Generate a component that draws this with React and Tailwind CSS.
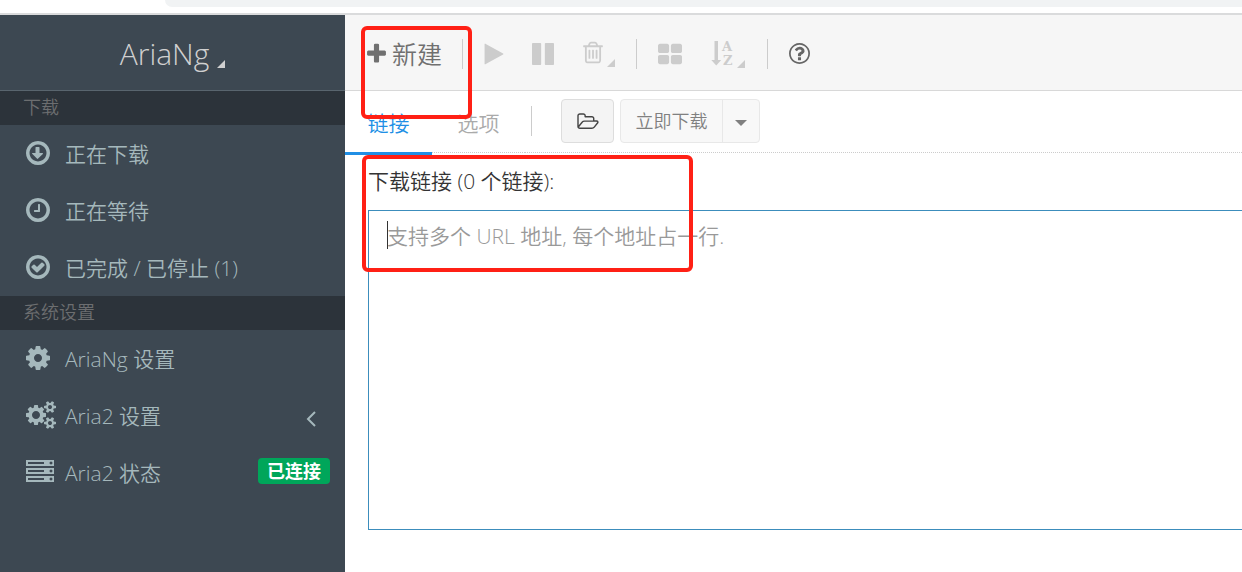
import React from "react";

const RING_OUTER =
  "M1664 896q0 209-103 385.5t-279.5 279.5-385.5 103-385.5-103-279.5-279.5-103-385.5 103-385.5 279.5-279.5 385.5-103 385.5 103 279.5 279.5 103 385.5z";
const RING_INNER =
  "M896 352q-148 0-273 73t-198 198-73 273 73 273 198 198 273 73 273-73 198-198 73-273-73-273-198-198-273-73z";

const PATHS = {
  down:
    "M1216 928q0 14-10 24l-319 319q-10 9-23 9-12 0-23-9l-320-320q-15-16-7-35 8-20 30-20h192v-352q0-14 9-23t23-9h192q14 0 23 9t9 23v352h192q14 0 23 9t9 23z",
  clock:
    "M1024 544v448q0 14-9 23t-23 9h-320q-14 0-23-9t-9-23v-64q0-14 9-23t23-9h224v-352q0-14 9-23t23-9h64q14 0 23 9t9 23z",
  check:
    "M1299 813l-422 422q-19 19-45 19t-45-19l-294-294q-19-19-19-45t19-45l102-102q19-19 45-19t45 19l147 147 275-275q19-19 45-19t45 19l102 102q19 19 19 45t-19 45z",
  cog:
    "M1152 896q0-106-75-181t-181-75-181 75-75 181 75 181 181 75 181-75 75-181zm512-109v222q0 12-8 23t-20 13l-185 28q-19 54-39 91 35 50 107 138 10 12 10 25t-9 23q-27 37-99 108t-94 71q-12 0-26-9l-138-108q-44 23-91 38-16 136-29 186-7 28-36 28h-222q-14 0-24.500-8.500t-11.500-21.500l-28-184q-49-16-90-37l-141 107q-10 9-25 9-14 0-25-11-126-114-165-168-7-10-7-23 0-12 8-23 15-21 51-66.500t54-70.500q-27-50-41-99l-183-27q-13-2-21-12.500t-8-23.500v-222q0-12 8-23t19-13l186-28q14-46 39-92-40-57-107-138-10-12-10-24 0-10 9-23 26-36 98.500-107.500t94.500-71.500q13 0 26 10l138 107q44-23 91-38 16-136 29-186 7-28 36-28h222q14 0 24.500 8.500t11.500 21.500l28 184q49 16 90 37l142-107q9-9 24-9 13 0 25 10 129 119 165 170 7 8 7 22 0 12-8 23-15 21-51 66.500t-54 70.500q26 50 41 98l183 28q13 2 21 12.500t8 23.500z",
  cogs:
    "M896 896q0-106-75-181t-181-75-181 75-75 181 75 181 181 75 181-75 75-181zm768 512q0-52-38-90t-90-38-90 38-38 90q0 53 37.500 90.500t90.500 37.500 90.500-37.500 37.500-90.500zm0-1024q0-52-38-90t-90-38-90 38-38 90q0 53 37.500 90.500t90.500 37.500 90.500-37.500 37.500-90.500zm-384 421v185q0 10-7 19.500t-16 10.500l-155 24q-11 35-32 76 34 48 90 115 7 11 7 20 0 12-7 19-23 30-82.500 89.500t-78.500 59.500q-11 0-21-7l-115-90q-37 19-77 31-11 108-23 155-7 24-30 24h-186q-11 0-20-7.500t-10-17.500l-23-153q-34-10-75-31l-118 89q-7 7-20 7-11 0-21-8-144-133-144-160 0-9 7-19 10-14 41-53t47-61q-23-44-35-82l-152-24q-10-1-17-9.500t-7-19.500v-185q0-10 7-19.500t16-10.500l155-24q11-35 32-76-34-48-90-115-7-11-7-20 0-12 7-20 22-30 82-89t79-59q11 0 21 7l115 90q34-18 77-32 11-108 23-154 7-24 30-24h186q11 0 20 7.500t10 17.500l23 153q34 10 75 31l118-89q8-7 20-7 11 0 21 8 144 133 144 160 0 8-7 19-12 16-42 54t-45 60q23 48 34 82l152 23q10 2 17 10.500t7 19.500zm640 533v140q0 16-149 31-12 27-30 52 51 113 51 138 0 4-4 7-122 71-124 71-8 0-46-47t-52-68q-20 2-30 2t-30-2q-14 21-52 68t-46 47q-2 0-124-71-4-3-4-7 0-25 51-138-18-25-30-52-149-15-149-31v-140q0-16 149-31 13-29 30-52-51-113-51-138 0-4 4-7 4-2 35-20t59-34 30-16q8 0 46 46.500t52 67.500q20-2 30-2t30 2q51-71 92-112l6-2q4 0 124 70 4 3 4 7 0 25-51 138 17 23 30 52 149 15 149 31zm0-1024v140q0 16-149 31-12 27-30 52 51 113 51 138 0 4-4 7-122 71-124 71-8 0-46-47t-52-68q-20 2-30 2t-30-2q-14 21-52 68t-46 47q-2 0-124-71-4-3-4-7 0-25 51-138-18-25-30-52-149-15-149-31v-140q0-16 149-31 13-29 30-52-51-113-51-138 0-4 4-7 4-2 35-20t59-34 30-16q8 0 46 46.500t52 67.500q20-2 30-2t30 2q51-71 92-112l6-2q4 0 124 70 4 3 4 7 0 25-51 138 17 23 30 52 149 15 149 31z",
  server:
    "M128 1408h1024v-128h-1024v128zm0-512h1024v-128h-1024v128zm1568 448q0-40-28-68t-68-28-68 28-28 68 28 68 68 28 68-28 28-68zm-1568-960h1024v-128h-1024v128zm1568 448q0-40-28-68t-68-28-68 28-28 68 28 68 68 28 68-28 28-68zm0-512q0-40-28-68t-68-28-68 28-28 68 28 68 68 28 68-28 28-68zm96 832v384h-1792v-384h1792zm0-512v384h-1792v-384h1792zm0-512v384h-1792v-384h1792z",
  plus:
    "M1600 736v192q0 40-28 68t-68 28h-416v416q0 40-28 68t-68 28h-192q-40 0-68-28t-28-68v-416h-416q-40 0-68-28t-28-68v-192q0-40 28-68t68-28h416v-416q0-40 28-68t68-28h192q40 0 68 28t28 68v416h416q40 0 68 28t28 68z",
  play:
    "M1576 927l-1328 738q-23 13-39.500 3t-16.500-36v-1472q0-26 16.500-36t39.500 3l1328 738q23 13 23 31t-23 31z",
  pause:
    "M1664 192v1408q0 26-19 45t-45 19h-512q-26 0-45-19t-19-45v-1408q0-26 19-45t45-19h512q26 0 45 19t19 45zm-896 0v1408q0 26-19 45t-45 19h-512q-26 0-45-19t-19-45v-1408q0-26 19-45t45-19h512q26 0 45 19t19 45z",
  trash:
    "M704 736v576q0 14-9 23t-23 9h-64q-14 0-23-9t-9-23v-576q0-14 9-23t23-9h64q14 0 23 9t9 23zm256 0v576q0 14-9 23t-23 9h-64q-14 0-23-9t-9-23v-576q0-14 9-23t23-9h64q14 0 23 9t9 23zm256 0v576q0 14-9 23t-23 9h-64q-14 0-23-9t-9-23v-576q0-14 9-23t23-9h64q14 0 23 9t9 23zm128 724v-948h-896v948q0 22 7 40.500t14.500 27 10.500 8.500h832q3 0 10.500-8.500t14.500-27 7-40.500zm-672-1076h448l-48-117q-7-9-17-11h-317q-10 2-17 11zm928 32v64q0 14-9 23t-23 9h-96v948q0 83-47 143.500t-113 60.500h-832q-66 0-113-58.500t-47-141.500v-952h-96q-14 0-23-9t-9-23v-64q0-14 9-23t23-9h309l70-167q15-37 54-63t79-26h320q40 0 79 26t54 63l70 167h309q14 0 23 9t9 23z",
  grid:
    "M832 1024v384q0 52-38 90t-90 38h-512q-52 0-90-38t-38-90v-384q0-52 38-90t90-38h512q52 0 90 38t38 90zm0-768v384q0 52-38 90t-90 38h-512q-52 0-90-38t-38-90v-384q0-52 38-90t90-38h512q52 0 90 38t38 90zm896 768v384q0 52-38 90t-90 38h-512q-52 0-90-38t-38-90v-384q0-52 38-90t90-38h512q52 0 90 38t38 90zm0-768v384q0 52-38 90t-90 38h-512q-52 0-90-38t-38-90v-384q0-52 38-90t90-38h512q52 0 90 38t38 90z",
  help:
    "M1008 1200v160q0 14-9 23t-23 9h-160q-14 0-23-9t-9-23v-160q0-14 9-23t23-9h160q14 0 23 9t9 23zm256-496q0 50-15 90t-45.500 69-52 44-59.500 36q-32 18-46.500 28t-26 24-11.500 29v32q0 14-9 23t-23 9h-160q-14 0-23-9t-9-23v-68q0-35 10.500-64.500t24-47.500 39-35.500 41-25.500 44.500-21q53-25 75-43t22-49q0-42-43.500-71.500t-95.500-29.500q-56 0-95 27-29 20-80 83-9 12-25 12-11 0-19-6l-108-82q-10-7-12-20t5-23q122-192 349-192 129 0 238.500 89.500t109.500 214.500zm-368-448q-130 0-248.500 51t-204 136.500-136.500 204-51 248.500 51 248.500 136.500 204 204 136.500 248.500 51 248.500-51 204-136.500 136.500-204 51-248.500-51-248.500-136.500-204-204-136.500-248.500-51z",
  folder:
    "M1781 1000q0-31-53-31h-1088q-40 0-85.500 21.500t-71.500 52.500l-294 363q-18 24-18 40 0 31 53 31h1088q40 0 86-22t71-53l294-363q18-22 18-39zm-1141-159h768v-160q0-40-28-68t-68-28h-576q-40 0-68-28t-28-68v-64q0-40-28-68t-68-28h-320q-40 0-68 28t-28 68v853l256-315q44-53 116-87.500t140-34.500zm1269 159q0 62-46 120l-295 363q-43 53-116 87.500t-140 34.500h-1088q-92 0-158-66t-66-158v-960q0-92 66-158t158-66h320q92 0 158 66t66 158v32h544q92 0 158 66t66 158v160h192q54 0 99 24.500t67 70.500q15 32 15 68z",
};

function Icon({ d, box = "128 0 1536 1792", className }) {
  return (
    <svg viewBox={box} className={className} fill="currentColor" fillRule="evenodd" aria-hidden="true">
      <path d={d} />
    </svg>
  );
}

function Corner({ className = "" }) {
  return (
    <svg viewBox="0 0 8 8" className={"size-2 " + className} fill="currentColor" aria-hidden="true">
      <path d="M8 0v8H0z" />
    </svg>
  );
}

function SortIcon() {
  return (
    <svg viewBox="0 0 24 28" className="h-7 w-6" fill="currentColor" aria-hidden="true">
      <path d="M3.500 1h3.500v19h3.200L5.250 25.500.3 20h3.200z" />
      <text x="11" y="11" className="font-['DejaVu_Serif',serif] text-[13px] leading-none font-bold">A</text>
      <text x="12" y="25" className="font-['DejaVu_Serif',serif] text-[13px] leading-none font-bold">Z</text>
    </svg>
  );
}

const ring = (inner) => RING_OUTER + RING_INNER + inner;

const downloads = [
  { label: "正在下载", d: ring(PATHS.down) },
  { label: "正在等待", d: ring(PATHS.clock) },
  { label: "已完成 / 已停止 (1)", d: ring(PATHS.check) },
];

const settings = [
  { label: "AriaNg 设置", d: PATHS.cog },
  { label: "Aria2 设置", d: PATHS.cogs, box: "0 0 1920 1792", size: "h-7 w-[30px]", expandable: true },
  { label: "Aria2 状态", d: PATHS.server, box: "0 0 1792 1792", size: "size-7", badge: "已连接" },
];

function NavItem({ label, d, box, size = "h-7 w-6", expandable, badge }) {
  return (
    <li>
      <a href="#" className="flex h-[57px] items-center pr-[15px] pb-[2px] pl-[26px]">
        <span className="flex w-[39px] shrink-0">
          <Icon d={d} box={box} className={size} />
        </span>
        <span className="grow pt-1 whitespace-nowrap">{label}</span>
        {expandable && (
          <svg viewBox="0 0 10 16" className="mt-2 mr-[14px] h-4 w-[10px]" fill="none" stroke="currentColor" strokeWidth="2" aria-hidden="true">
            <path d="M9 1 2 8l7 7" />
          </svg>
        )}
        {badge && (
          <span className="mb-[2px] flex h-[26px] items-center rounded bg-[#00a65a] px-[9px] text-[18px] leading-none font-bold text-white">
            {badge}
          </span>
        )}
      </a>
    </li>
  );
}

function NavSection({ title, items }) {
  return (
    <section>
      <h2 className="flex h-[34px] items-center bg-[#2c333a] pb-[2px] pl-[23px] text-[18px] text-[#6c6e70]">{title}</h2>
      <ul>
        {items.map((item) => (
          <NavItem key={item.label} {...item} />
        ))}
      </ul>
    </section>
  );
}

function Divider() {
  return <span className="h-[30px] w-px shrink-0 bg-[#ccc]" />;
}

export default function App() {
  return (
    <div className="relative flex min-h-screen flex-col overflow-hidden bg-white font-['Open_Sans','Noto_Sans_CJK_SC',sans-serif] text-[21px] font-[350]">
      <div className="h-[15px] shrink-0 border-b-2 border-[#dadbdc] pl-[165px]">
        <div className="h-[7px] rounded-bl-[14px] bg-[#f1f3f4]" />
      </div>

      <div className="flex grow">
        <aside className="w-[345px] shrink-0 bg-[#3d4852] text-[#a5b8bc]">
          <button type="button" className="flex h-[76px] w-full items-center justify-center gap-2 border-b border-[#59656e] pt-[2px] text-[30px] font-light text-[#d0d0d0]">
            AriaNg
            <Corner className="mt-5" />
          </button>
          <nav>
            <NavSection title="下载" items={downloads} />
            <NavSection title="系统设置" items={settings} />
          </nav>
        </aside>

        <main className="min-w-0 grow">
          <header className="flex h-[76px] items-center border-b border-[#d8d8d8] bg-[#f6f6f6] pt-[2px] pl-[22px] text-[#ccc]">
            <button type="button" className="mr-5 flex items-center gap-[6px] text-[25px] leading-none text-[#707070]">
              <Icon d={PATHS.plus} box="192 0 1408 1792" className="h-6 w-[19px]" />
              <span className="pt-[2px]">新建</span>
            </button>
            <Divider />
            <button type="button" aria-label="开始" className="ml-[21px]">
              <Icon d={PATHS.play} box="192 0 1408 1792" className="h-6 w-[20px]" />
            </button>
            <button type="button" aria-label="暂停" className="ml-7">
              <Icon d={PATHS.pause} className="h-[26px] w-[22px]" />
            </button>
            <button type="button" aria-label="删除" className="ml-[29px] flex items-end gap-1">
              <Icon d={PATHS.trash} box="192 0 1408 1792" className="mb-[2px] h-[25px] w-5" />
              <Corner />
            </button>
            <span className="ml-[21px] flex"><Divider /></span>
            <button type="button" aria-label="显示" className="ml-[21px]">
              <Icon d={PATHS.grid} box="64 0 1664 1664" className="size-6" />
            </button>
            <button type="button" aria-label="排序" className="ml-[29px] flex items-end gap-[2px]">
              <SortIcon />
              <Corner />
            </button>
            <span className="ml-[22px] flex"><Divider /></span>
            <button type="button" aria-label="帮助" className="ml-[21px] text-[#666]">
              <Icon d={RING_OUTER + PATHS.help} className="h-[25px] w-[21px]" />
            </button>
          </header>

          <div className="flex h-[64px] items-start">
            <div role="tablist" className="flex">
              <button type="button" role="tab" aria-selected="true" className="h-16 w-[87px] border-b-[3px] border-[#208fe5] pt-1 text-[#208fe5]">链接</button>
              <button type="button" role="tab" aria-selected="false" className="h-[62px] w-[93px] border-b border-dotted border-[#ccc] pt-1 text-[#aaa]">选项</button>
            </div>
            <div className="flex h-[62px] grow items-center border-b border-dotted border-[#ccc] pb-[2px] pl-[6px]">
              <Divider />
              <button type="button" aria-label="打开文件" className="ml-[29px] flex h-11 w-[53px] items-center justify-center rounded border border-[#ddd] bg-[#f4f4f4] text-[#444]">
                <Icon d={PATHS.folder} box="0 0 1920 1792" className="h-5 w-[22px]" />
              </button>
              <div className="ml-[6px] flex h-11 rounded border border-[#e8e8e8] bg-[#f8f8f8] text-[18px] text-[#808080]">
                <button type="button" className="w-[102px] border-r border-[#e8e8e8] pt-[2px]">立即下载</button>
                <button type="button" aria-label="更多" className="flex w-9 items-center justify-center">
                  <svg viewBox="0 0 12 6" className="mt-1 h-[6px] w-3" fill="currentColor" aria-hidden="true">
                    <path d="M0 0h12L6 6z" />
                  </svg>
                </button>
              </div>
            </div>
          </div>

          <form className="pl-[23px]">
            <label htmlFor="urls" className="flex h-[55px] items-center pb-[2px] text-[#333]">下载链接 (0 个链接):</label>
            <div className="relative -mr-[2px]">
              <textarea
                id="urls"
                placeholder="支持多个 URL 地址, 每个地址占一行."
                className="block h-80 w-full resize-none border border-[#3c8dbc] bg-white px-[18px] py-[9px] leading-8 text-[#555] outline-none placeholder:text-[#999]"
              />
              <span className="absolute top-[11px] left-[19px] h-7 w-px bg-[#333]" />
            </div>
          </form>
        </main>
      </div>

      <div className="pointer-events-none absolute top-[26px] left-[361px] h-[93px] w-[111px] rounded-md border-4 border-[#ff2015]" />
      <div className="pointer-events-none absolute top-[155px] left-[362px] h-[117px] w-[331px] rounded-md border-4 border-[#ff2015]" />
    </div>
  );
}
